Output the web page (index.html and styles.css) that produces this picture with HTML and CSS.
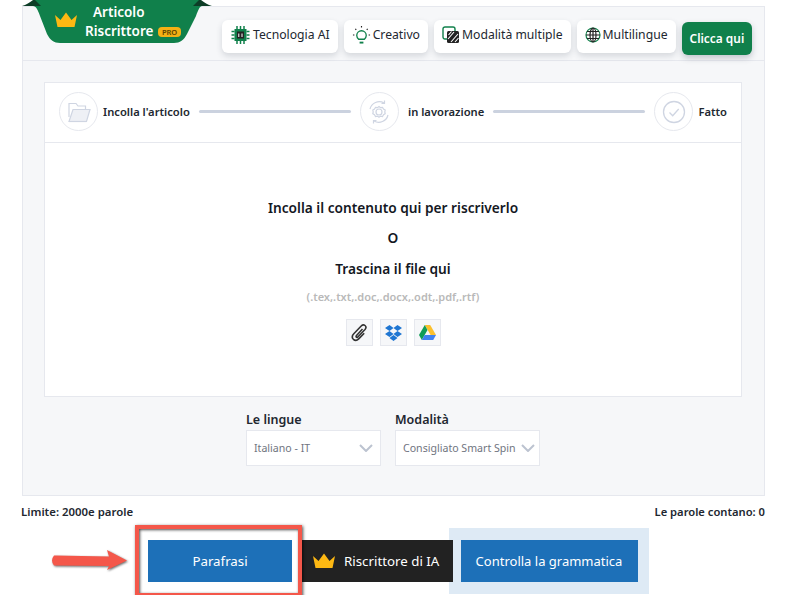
FILE: index.html
```html
<!DOCTYPE html>
<html lang="it">
<head>
    <meta charset="UTF-8">
    <meta name="viewport" content="width=device-width, initial-scale=1.0">
    <title>Articolo Riscrittore</title>
    <link rel="stylesheet" href="styles.css">
</head>
<body>
    <div class="page">
        <div class="panel">
            <div class="panel-head">
                <div class="ribbon">
                    <svg class="ribbon-bg" width="190" height="43" viewBox="0 0 190 43">
                        <path d="M11 0 H179 L180 6 C178 6 176 10 174 16 L165 34 C162 40 158 43 152 43 H38 C32 43 28 40 25 34 L18 16 C16 10 14 6 11 6 Z" fill="#10804b"/>
                        <path d="M0 6 C4 5 8 2 11 0 H13 C15 2 17 4 19 6 Z M190 6 C186 5 182 2 179 0 H177 C175 2 173 4 171 6 Z" fill="#0d3d27"/>
                    </svg>
                    <svg class="ribbon-crown" width="24" height="16" viewBox="0 0 24 16"><path d="M1 3 L6.5 8 L12 0.5 L17.5 8 L23 3 L20.5 15 H3.5 Z" fill="#fdb813"/></svg>
                    <div class="ribbon-text">
                        <span>Articolo</span>
                        <span>Riscrittore <b class="pro">PRO</b></span>
                    </div>
                </div>
                <div class="tabs">
                    <div class="tab">
                        <svg width="21" height="20" viewBox="0 0 20 20"><path d="M1 6.5h3M1 10h3M1 13.5h3M16 6.5h3M16 10h3M16 13.5h3M6.5 1v3M10 1v3M13.500 1v3M6.500 16v3M10 16v3M13.500 16v3" stroke="#10804b" stroke-width="1.500"/><rect x="4" y="4" width="12" height="12" fill="#10804b"/><rect x="6.500" y="6.500" width="7" height="7" fill="#222"/><path d="M8.300 12V8.500M11.500 12V8.500" stroke="#fff"/></svg>
                        Tecnologia AI
                    </div>
                    <div class="tab">
                        <svg width="19" height="20" viewBox="0 0 20 20"><path d="M7 14.500C5.500 13 5 12 5 10.500a5 5 0 0 1 10 0c0 1.500-.5 2.500-2 4z" fill="none" stroke="#10804b" stroke-width="1.400"/><path d="M8 17h4v2H8z" fill="#10804b"/><path d="M1 10h1.500M17.500 10H19M10 .5V2M3.500 3.500l1 1M16.500 3.500l-1 1" stroke="#222" stroke-width="1.200"/></svg>
                        Creativo
                    </div>
                    <div class="tab">
                        <svg width="18" height="18" viewBox="0 0 18 18"><rect x="1" y="1" width="12" height="12" rx="2" fill="none" stroke="#10804b" stroke-width="1.400"/><rect x="5" y="5" width="12" height="12" rx="1.500" fill="#222"/><path d="M6 13l6-7M9 16l7-8M6.500 9l3-3.500M13 16l3.500-4" stroke="#fff" stroke-width="1.100"/></svg>
                        Modalità multiple
                    </div>
                    <div class="tab">
                        <svg width="16" height="16" viewBox="0 0 16 16" fill="none" stroke-width="1.200"><circle cx="8" cy="8" r="7" stroke="#10804b"/><ellipse cx="8" cy="8" rx="3" ry="7" stroke="#222"/><path d="M1 8h14M2 4.500h12M2 11.500h12M8 1v14" stroke="#222"/></svg>
                        Multilingue
                    </div>
                    <div class="tab-cta">Clicca qui</div>
                </div>
            </div>

            <div class="panel-body">
                <div class="card">
                    <div class="steps">
                        <div class="step-icon">
                            <svg width="24" height="22" viewBox="0 0 24 22" fill="none" stroke="#cfd5e2" stroke-width="1.200"><path d="M2 16V2.500h7l2 2.500h7.500v3"/><path d="M2 20.500L6 8.500h17l-3.500 12z" fill="#eef0f5"/><path d="M2 20.500h17.500"/></svg>
                        </div>
                        <span class="step-label">Incolla l'articolo</span>
                        <div class="step-line"></div>
                        <div class="step-icon">
                            <svg width="24" height="24" viewBox="0 0 24 24" fill="none" stroke="#cfd5e2" stroke-width="1.200"><circle cx="12" cy="12" r="3"/><path d="M12 6.500l1.500 1.200 2-.4 1 1.700 1.700 1-.4 2 .4 1.800-1.700 1-1 1.700-2-.4-1.500 1.200-1.500-1.200-2 .4-1-1.700-1.700-1 .4-1.800-.4-2 1.700-1 1-1.700 2 .4z"/><path d="M3 9A9.500 9.500 0 0 1 17 3M21 15a9.500 9.500 0 0 1-14 6"/><path d="M17.500.5V3.500H14.500M6.500 23.500V20.500H9.500"/></svg>
                        </div>
                        <span class="step-label step-label-mid">in lavorazione</span>
                        <div class="step-line"></div>
                        <div class="step-icon">
                            <svg width="24" height="24" viewBox="0 0 24 24" fill="none" stroke="#cfd5e2" stroke-width="1.300"><circle cx="12" cy="12" r="10.500"/><path d="M7.500 12.500l3.200 3.200 6-6.700"/></svg>
                        </div>
                        <span class="step-label">Fatto</span>
                    </div>
                    <div class="drop">
                        <p class="drop-title">Incolla il contenuto qui per riscriverlo</p>
                        <p class="drop-title drop-or">O</p>
                        <p class="drop-title">Trascina il file qui</p>
                        <p class="drop-types">(.tex,.txt,.doc,.docx,.odt,.pdf,.rtf)</p>
                        <div class="sources">
                            <div class="source">
                                <svg width="17" height="18" viewBox="0 0 17 18" fill="none" stroke="#333" stroke-width="1.600"><path d="M11.500 5L5.500 11.500c-.9 1-.1 2.300 1.100 1.700L14 5.500c1.500-1.700.9-3.200 0-4-1-.8-2.500-.8-3.800.5L2.800 9.800c-1.900 2-1.700 4.200-.4 5.500 1.400 1.300 3.600 1.300 5.300-.4l5.500-5.700"/></svg>
                            </div>
                            <div class="source">
                                <svg width="17" height="16" viewBox="0 0 17 16" fill="#1f76d2"><path d="M4.500 0L0 3l4.500 3L8.500 3zM12.500 0L8.500 3l4 3L17 3zM0 9l4.500 3 4-3-4-3zM17 9l-4.500 3-4-3 4-3zM4.500 13l4 3 4-3-4-3z"/></svg>
                            </div>
                            <div class="source">
                                <svg width="17" height="15" viewBox="0 0 17 15"><path d="M5.800 0h5.400L17 10h-5.400z" fill="#fbc02d"/><path d="M5.800 0L0 10l2.800 5L8.500 5z" fill="#109d58"/><path d="M2.800 15h11.400l2.800-5H5.600z" fill="#3f82f0"/></svg>
                            </div>
                        </div>
                    </div>
                </div>
                <div class="options">
                    <div class="option">
                        <label class="option-label">Le lingue</label>
                        <div class="select">
                            <span>Italiano - IT</span>
                            <svg class="chevron" width="14" height="8" viewBox="0 0 14 8"><path d="M1 1l6 6 6-6" fill="none" stroke="#bcc3d0" stroke-width="2"/></svg>
                        </div>
                    </div>
                    <div class="option">
                        <label class="option-label">Modalità</label>
                        <div class="select select-wide">
                            <span>Consigliato Smart Spin</span>
                            <svg class="chevron" width="14" height="8" viewBox="0 0 14 8"><path d="M1 1l6 6 6-6" fill="none" stroke="#bcc3d0" stroke-width="2"/></svg>
                        </div>
                    </div>
                </div>
            </div>
        </div>

        <div class="counts">
            <span class="count-limit">Limite: 2000e parole</span>
            <span>Le parole contano: 0</span>
        </div>

        <div class="actions">
            <div class="action-slot">
                <button class="btn btn-blue btn-main">Parafrasi</button>
            </div>
            <button class="btn btn-dark">
                <svg width="24" height="16" viewBox="0 0 24 16"><path d="M1 3 L6.500 8 L12 0.500 L17.500 8 L23 3 L20.500 15 H3.500 Z" fill="#fdb813"/></svg>
                Riscrittore di IA
            </button>
            <div class="action-hl">
                <button class="btn btn-blue btn-grammar">Controlla la grammatica</button>
            </div>
            <svg class="mark-arrow" width="84" height="28" viewBox="0 0 84 28"><path d="M5 7.500 L60 8.500 L58 2 L78 12.500 L58 22 L60 18 L5 17.500 Q1 12.500 5 7.500 Z" fill="#f4574a"/></svg>
            <div class="mark-box"></div>
        </div>
    </div>
</body>
</html>
```

FILE: styles.css
```css
* { box-sizing: border-box; }
body { margin: 0; background: #fff; font-family: "Noto Sans", sans-serif; color: #222730; overflow: hidden; }
.page { width: 785px; height: 595px; padding: 6px 20px 0 22px; }

.panel { height: 490px; background: #f6f7f9; border: 1px solid #e6e8ee; }
.panel-head { display: flex; height: 54px; border-bottom: 1px solid #e6e8ee; }
.ribbon { position: relative; width: 190px; height: 43px; margin-top: -7px; margin-left: -1px; flex: none; }
.ribbon-bg { position: absolute; left: 0; top: 0; }
.ribbon-crown { position: absolute; left: 32px; top: 12px; }
.ribbon-text { position: absolute; left: 0; top: 3px; width: 190px; padding-left: 63px; color: #fff; font-size: 13.5px; font-weight: 600; line-height: 19px; }
.ribbon-text span { display: block; white-space: nowrap; }
.ribbon-text span:first-child { padding-left: 8px; }
.pro { display: inline-block; padding: 0 4px; margin-left: 1px; background: #f5b014; color: #5b4300; font-size: 7.5px; font-weight: 600; line-height: 10px; border-radius: 4px; vertical-align: 1px; }

.tabs { display: flex; gap: 6px; align-items: flex-start; padding-top: 13px; padding-left: 10px; }
.tab { display: flex; align-items: center; gap: 2px; height: 33px; padding: 0 8px 4px; background: #fff; border-radius: 6px; box-shadow: 0 3px 6px rgba(40, 50, 70, .16); font-size: 12.2px; white-space: nowrap; }
.tab-cta { height: 33px; margin-top: 2px; padding: 0 8px; background: #10804b; color: #fff; font-size: 11.9px; font-weight: 600; line-height: 33px; border-radius: 6px; box-shadow: 0 3px 6px rgba(40, 50, 70, .25); white-space: nowrap; }

.panel-body { padding: 21px 22px 0 21px; }
.card { height: 315px; background: #fff; border: 1px solid #e6e8ee; }
.steps { display: flex; align-items: center; height: 60px; padding: 0 14px 2px; border-bottom: 1px solid #e6e8ee; }
.step-icon { display: flex; align-items: center; justify-content: center; width: 39px; height: 39px; flex: none; border: 1px solid #e6e8ee; border-radius: 50%; }
.step-label { margin-left: 5px; font-size: 11.2px; font-weight: 600; white-space: nowrap; }
.step-label-mid { margin-left: 9px; }
.step-line { flex: 1; height: 3px; margin: 0 9px; background: #cbd2df; border-radius: 2px; }

.drop { text-align: center; }
.drop-title { margin: 0 0 10px; font-size: 13.7px; font-weight: 600; line-height: 20px; color: #14181f; }
.drop-title:first-child { margin-top: 55px; }
.drop-or { margin-bottom: 11px; }
.drop-types { margin: 0; font-size: 11px; font-weight: 600; line-height: 16px; color: #b9b9b9; }
.sources { display: flex; justify-content: center; gap: 7px; margin-top: 14px; }
.source { display: flex; align-items: center; justify-content: center; width: 27px; height: 27px; background: #f6f7f9; border: 1px solid #e6e8ee; }

.options { display: flex; gap: 14px; justify-content: center; padding-top: 14px; }
.option-label { display: block; font-size: 12.5px; font-weight: 600; line-height: 17px; margin-bottom: 2px; }
.select { display: flex; align-items: center; justify-content: space-between; width: 135px; height: 36px; padding: 0 7px; background: #fff; border: 1px solid #e6e8ee; font-size: 10.6px; color: #6f7480; }
.select-wide { width: 145px; padding-right: 4px; white-space: nowrap; }

.counts { display: flex; justify-content: space-between; margin-left: -1px; padding-top: 8px; font-size: 11.2px; font-weight: 600; line-height: 16px; }
.count-limit { font-size: 11.4px; }

.actions { position: relative; display: flex; align-items: center; height: 66px; margin-top: 8px; padding-left: 126px; }
.btn { height: 42px; border: 0; color: #fff; font-family: inherit; font-size: 13.3px; }
.btn-blue { background: #1d70b8; }
.btn-dark { position: relative; z-index: 1; display: flex; align-items: center; gap: 8px; width: 151px; padding: 0 0 0 10px; background: #222; }
.btn-main { width: 144px; }
.action-slot { width: 154px; }
.action-hl { display: flex; align-items: center; justify-content: center; width: 200px; height: 66px; margin-left: -4px; background: #deeaf5; }
.btn-grammar { width: 177px; font-size: 13px; }

.mark-arrow { position: absolute; left: 27px; top: 20px; z-index: 2; filter: drop-shadow(1px 1px 1px rgba(0,0,0,.6)); }
.mark-box { position: absolute; left: 113px; top: -3px; width: 167px; height: 72px; z-index: 2; border: 4px solid #f4574a; box-shadow: 1px 1px 3px rgba(0,0,0,.7), inset 1px 1px 3px rgba(0,0,0,.7); }
```
